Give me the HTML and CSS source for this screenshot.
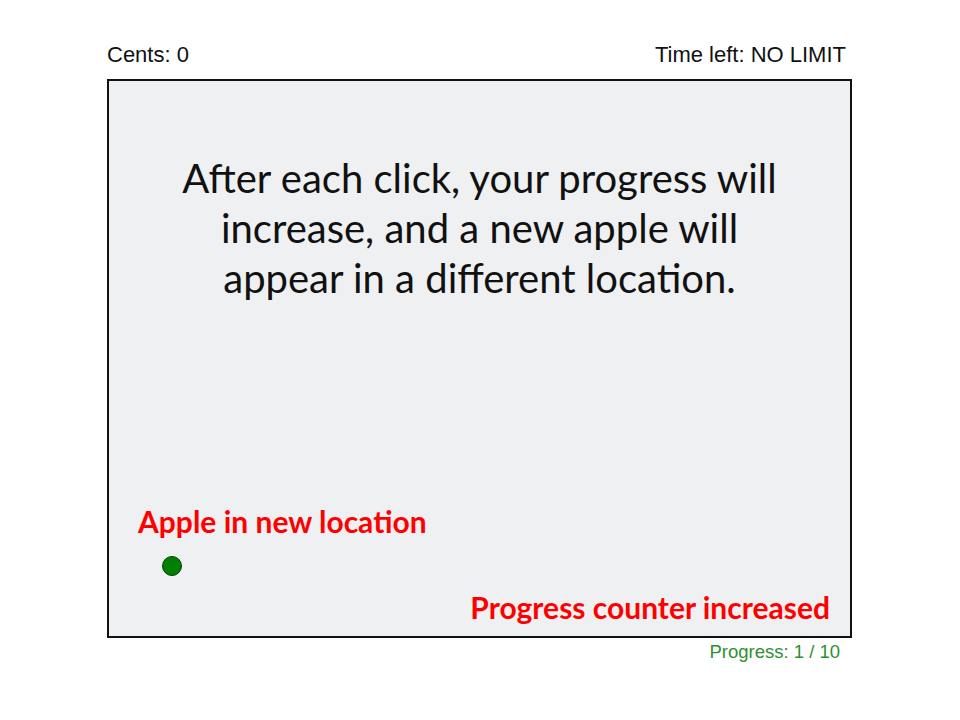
FILE: index.html
```html
<!DOCTYPE html>
<html lang="en">
<head>
<meta charset="utf-8">
<title>Apple task</title>
<link rel="stylesheet" href="styles.css">
</head>
<body>
<div class="page">
  <div class="topbar">
    <span class="cents">Cents: 0</span>
    <span class="timer">Time left: NO LIMIT</span>
  </div>
  <div class="stage">
    <p class="instruction">After each click, your progress will<br>increase, and a new apple will<br>appear in a different location.</p>
    <div class="bottom">
      <p class="note note-apple">Apple in new location</p>
      <p class="note note-progress">Progress counter increased</p>
    </div>
    <div class="apple"></div>
  </div>
  <div class="progress">Progress: 1 / 10</div>
</div>
</body>
</html>
```
FILE: styles.css
```css
html, body {
  margin: 0;
  padding: 0;
  background: #ffffff;
}
.page {
  width: 745px;
  margin-left: 107px;
  padding-top: 42px;
  font-family: "Liberation Sans", Arial, sans-serif;
}
.topbar {
  display: flex;
  justify-content: space-between;
  align-items: baseline;
  padding-right: 6px;
  font-size: 22px;
  line-height: 25px;
  color: #111;
  margin-bottom: 12px;
}
.stage {
  position: relative;
  box-sizing: border-box;
  height: 559px;
  border: 2px solid #111;
  background: #eff0f2;
  display: flex;
  flex-direction: column;
}
.instruction {
  margin: 0;
  padding-top: 72px;
  text-align: center;
  font-family: Lato, "Open Sans", sans-serif;
  font-size: 40px;
  line-height: 50px;
  color: #111;
}
.bottom {
  margin-top: auto;
  padding: 0 20px 12px 29px;
  display: flex;
  flex-direction: column;
}
.note {
  margin: 0;
  font-family: Lato, "Open Sans", sans-serif;
  font-weight: 700;
  font-size: 30px;
  line-height: 34px;
  color: #ff0000;
}
.note-apple {
  align-self: flex-start;
  margin-bottom: 52px;
}
.note-progress {
  align-self: flex-end;
}
.apple {
  position: absolute;
  left: 53px;
  top: 475px;
  width: 18px;
  height: 18px;
  border-radius: 50%;
  background: #008000;
  border: 1px solid #0b3a0b;
}
.progress {
  text-align: right;
  padding-right: 12px;
  padding-top: 3px;
  font-size: 18.5px;
  line-height: 22px;
  color: #2f8f2f;
}
```
